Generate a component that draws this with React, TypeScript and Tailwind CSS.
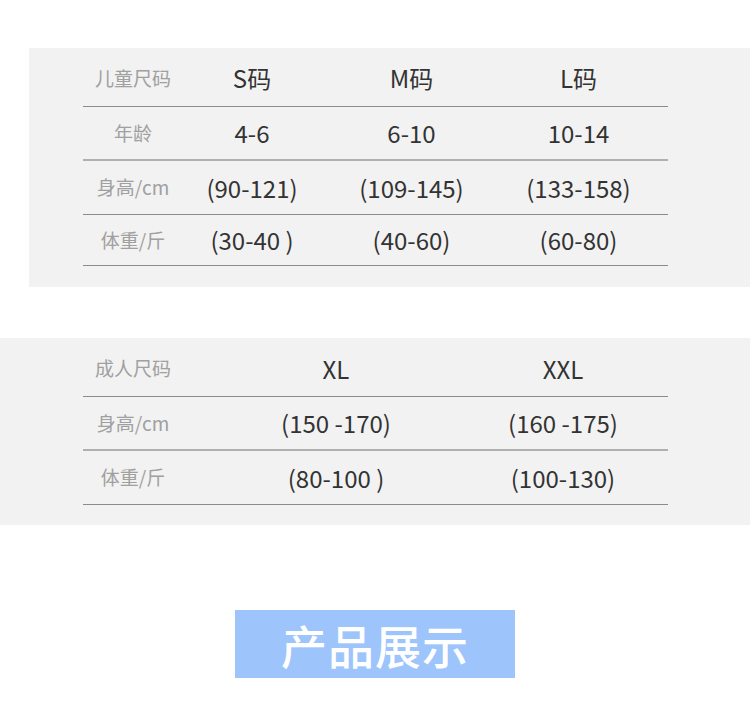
import React from 'react';

// Size chart: kids + adults tables, then the "product display" banner
const kidsRows = [
    { label: '年龄', values: ['4-6', '6-10', '10-14'], border: 'border-b-2 border-[#b0b0b0]', h: 'h-[54px]' },
    { label: '身高/cm', values: ['(90-121)', '(109-145)', '(133-158)'], border: 'border-b border-[#8c8c8c]', h: 'h-[54px]' },
    { label: '体重/斤', values: ['(30-40 )', '(40-60)', '(60-80)'], border: 'border-b border-[#8c8c8c]', h: 'h-[51px]' },
];

const adultRows = [
    { label: '身高/cm', values: ['(150 -170)', '(160 -175)'], border: 'border-b-2 border-[#b0b0b0]', h: 'h-[54px]' },
    { label: '体重/斤', values: ['(80-100 )', '(100-130)'], border: 'border-b border-[#8c8c8c]', h: 'h-[54px]' },
];

const font = { fontFamily: '"Noto Sans CJK SC", "Noto Sans", sans-serif' };

export default function App() {
    return (
        <div className="w-[750px] h-[708px] bg-white flex flex-col" style={font}>

            {/* KIDS TABLE */}
            <div className="mt-[48px] ml-[29px] h-[239px] bg-[#f2f2f2] pt-[5px]">
                <div className="ml-[54px] w-[585px]">
                    <div className="grid grid-cols-[100px_138px_181px_153px] items-center h-[54px] pb-[3px] border-b border-[#8c8c8c]">
                        <span className="text-center text-[19px] text-[#a0a0a0]">儿童尺码</span>
                        <span className="text-center text-[24px] text-[#333]">S码</span>
                        <span className="text-center text-[24px] text-[#333]">M码</span>
                        <span className="text-center text-[24px] text-[#333]">L码</span>
                    </div>
                    {kidsRows.map(row => (
                        <div key={row.label} className={`grid grid-cols-[100px_138px_181px_153px] items-center ${row.h} ${row.border}`}>
                            <span className="text-center text-[19px] text-[#a0a0a0]">{row.label}</span>
                            {row.values.map(v => (
                                <span key={v} className="text-center text-[24px] text-[#333] whitespace-pre">{v}</span>
                            ))}
                        </div>
                    ))}
                </div>
            </div>

            {/* ADULT TABLE */}
            <div className="mt-[51px] h-[187px] bg-[#f2f2f2] pt-[5px]">
                <div className="ml-[83px] w-[585px]">
                    <div className="grid grid-cols-[100px_306px_148px] items-center h-[54px] pb-[2px] border-b border-[#8c8c8c]">
                        <span className="text-center text-[19px] text-[#a0a0a0]">成人尺码</span>
                        <span className="text-center text-[24px] text-[#333]">XL</span>
                        <span className="text-center text-[24px] text-[#333]">XXL</span>
                    </div>
                    {adultRows.map(row => (
                        <div key={row.label} className={`grid grid-cols-[100px_306px_148px] items-center ${row.h} ${row.border}`}>
                            <span className="text-center text-[19px] text-[#a0a0a0]">{row.label}</span>
                            {row.values.map(v => (
                                <span key={v} className="text-center text-[24px] text-[#333] whitespace-pre">{v}</span>
                            ))}
                        </div>
                    ))}
                </div>
            </div>

            {/* BANNER */}
            <div className="mt-[85px] ml-[235px] w-[280px] h-[68px] bg-[#9dc4fb] flex items-center justify-center">
                <span className="text-[46px] font-medium text-white leading-none tracking-[1px]">产品展示</span>
            </div>
        </div>
    );
}
